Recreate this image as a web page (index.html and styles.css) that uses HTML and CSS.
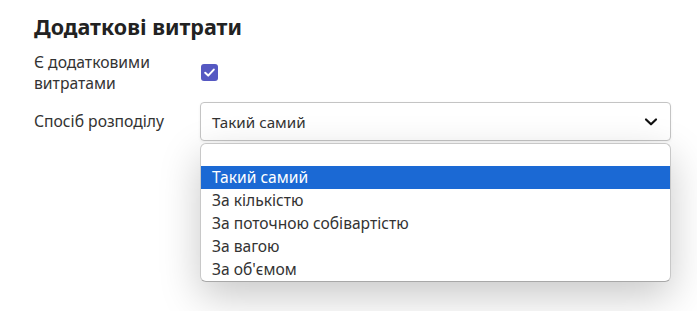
FILE: index.html
```html
<!DOCTYPE html>
<html lang="uk">
<head>
<meta charset="utf-8">
<link rel="stylesheet" href="styles.css">
</head>
<body>
<div class="panel">
  <h2 class="title">Додаткові витрати</h2>
  <div class="row row-check">
    <div class="label">Є додатковими<br>витратами</div>
    <div class="control">
      <span class="checkbox">
        <svg width="17" height="17" viewBox="0 0 17 17"><path d="M4.2 8.8 L7.2 11.6 L12.8 5.6" fill="none" stroke="#fff" stroke-width="2" stroke-linecap="round" stroke-linejoin="round"/></svg>
      </span>
    </div>
  </div>
  <div class="row row-select">
    <div class="label">Спосіб розподілу</div>
    <div class="control select-wrap">
      <div class="select">
        <span>Такий самий</span>
        <svg class="chev" width="14" height="10" viewBox="0 0 14 10"><path d="M2 2.5 L7 7.3 L12 2.5" fill="none" stroke="#111" stroke-width="2.2" stroke-linecap="round" stroke-linejoin="round"/></svg>
      </div>
      <div class="options-popup">
        <div class="opt empty"></div>
        <div class="opt active">Такий самий</div>
        <div class="opt">За кількістю</div>
        <div class="opt">За поточною собівартістю</div>
        <div class="opt">За вагою</div>
        <div class="opt">За об'ємом</div>
      </div>
    </div>
  </div>
</div>
</body>
</html>
```

FILE: styles.css
```css
html, body {
  margin: 0;
  background: #fff;
}
body {
  font-family: "Noto Sans", "Open Sans", sans-serif;
  color: #333;
  min-height: 311px;
}
.panel {
  padding: 14px 26px 0 34px;
}
.title {
  margin: 0 0 12px;
  font-size: 21.5px;
  font-weight: 700;
  color: #222;
  line-height: 26px;
}
.row {
  display: grid;
  grid-template-columns: 166px 1fr;
  align-items: center;
}
.label {
  font-size: 15.7px;
  line-height: 21px;
  color: #333;
}
.row-check {
  margin-bottom: 8px;
}
.checkbox {
  display: block;
  width: 17px;
  height: 17px;
  margin: -2px 0 0 1px;
  border-radius: 3px;
  background: #5558c2;
}
.checkbox svg { display: block; }
.select-wrap {
  position: relative;
}
.select {
  height: 37px;
  border: 1px solid #c4c4c4;
  border-radius: 4px;
  display: flex;
  align-items: center;
  justify-content: space-between;
  padding: 0 12px 0 11px;
  font-size: 15.2px;
  color: #333;
  box-shadow: 0 1px 3px rgba(0,0,0,0.06);
}
.chev { display: block; }
.options-popup {
  position: absolute;
  z-index: 10;
  top: 41px;
  left: 0;
  width: 469px;
  height: 137px;
  background: #fff;
  border: 1px solid #c8c8c8;
  border-bottom-color: #a8a8a8;
  border-radius: 6px;
  box-shadow: 0 14px 40px rgba(0,0,0,0.22);
  overflow: hidden;
}
.opt {
  height: 23px;
  line-height: 23px;
  padding-left: 11px;
  font-size: 15.6px;
  color: #333;
}
.opt.empty { height: 22px; }
.opt.active {
  background: #1b69d4;
  color: #fff;
}
```
